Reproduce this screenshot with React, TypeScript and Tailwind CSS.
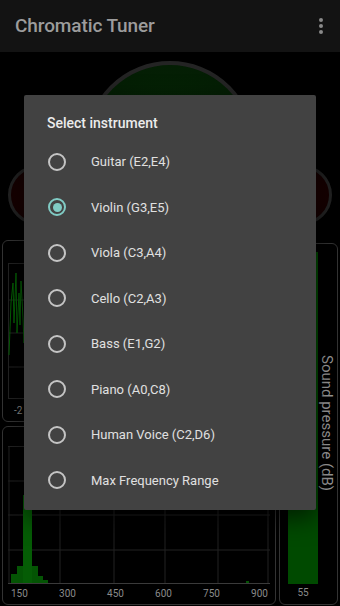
import React from "react"

const instruments = [
  "Guitar (E2,E4)",
  "Violin (G3,E5)",
  "Viola (C3,A4)",
  "Cello (C2,A3)",
  "Bass (E1,G2)",
  "Piano (A0,C8)",
  "Human Voice (C2,D6)",
  "Max Frequency Range",
]

function Radio({ checked }: { checked: boolean }) {
  return (
    <div
      className={
        checked
          ? "w-[18px] h-[18px] rounded-full border-2 border-[#80cbc4] flex items-center justify-center"
          : "w-[18px] h-[18px] rounded-full border-2 border-[#c4c4c4]"
      }
    >
      {checked && <div className="w-[9px] h-[9px] rounded-full bg-[#80cbc4]" />}
    </div>
  )
}

export default function App() {
  return (
    <div className="relative w-[340px] h-[606px] overflow-hidden bg-black font-['Roboto',sans-serif]">
      {/* App bar */}
      <div className="h-[52px] bg-[#131313] flex items-center justify-between pl-[15px] pr-[12px]">
        <span className="text-[19px] font-medium text-[#9c9c9c] tracking-[-0.1px]">Chromatic Tuner</span>
        <div className="flex flex-col gap-[2px] items-center w-[14px]">
          <div className="w-[4px] h-[4px] rounded-full bg-[#8a8a8a]" />
          <div className="w-[4px] h-[4px] rounded-full bg-[#8a8a8a]" />
          <div className="w-[4px] h-[4px] rounded-full bg-[#8a8a8a]" />
        </div>
      </div>

      {/* Gauges */}
      <div className="h-[188px] flex justify-between items-start px-[8px] pt-[9px]">
        <div className="mt-[104px] w-[60px] h-[60px] rounded-full border-[3px] border-[#222] bg-[radial-gradient(circle,#1e0000_0%,#110000_100%)]" />
        <div className="w-[170px] h-[170px] rounded-full border-[4px] border-[#242424] bg-[radial-gradient(circle,#052805_0%,#041e04_70%,#021402_100%)]" />
        <div className="mt-[104px] w-[60px] h-[60px] rounded-full border-[3px] border-[#222] bg-[radial-gradient(circle,#1e0000_0%,#110000_100%)]" />
      </div>

      {/* Charts */}
      <div className="flex h-[366px] pl-[2px] pr-[2px] pb-[1px] gap-[3px]">
        <div className="flex-1 flex flex-col gap-[4px]">
          {/* waveform */}
          <div className="h-[182px] rounded-[6px] border border-[#333] flex flex-col px-[5px] pt-[22px]">
            <svg width="262" height="136" className="block">
              <rect x="0.5" y="0.5" width="261" height="135" fill="none" stroke="#222" />
              <line x1="0" y1="37" x2="262" y2="37" stroke="#222" />
              <line x1="0" y1="70" x2="262" y2="70" stroke="#222" />
              <line x1="0" y1="104" x2="262" y2="104" stroke="#222" />
              <polyline
                fill="none"
                stroke="#056005"
                strokeWidth="1"
                points="1,92 3,40 5,20 6,60 8,10 9,70 11,30 12,62 13,18 15,55 16,80 18,40 19,25 20,60 21,100 22,50 24,70"
              />
            </svg>
            <span className="text-[10px] text-[#8a8a8a] pl-[6px] mt-[4px]">-2</span>
          </div>
          {/* spectrum */}
          <div className="flex-1 rounded-[6px] border border-[#333] flex flex-col px-[5px] pt-[19px]">
            <svg width="262" height="139" className="block">
              <line x1="1" y1="0" x2="1" y2="138" stroke="#222" />
              <line x1="52" y1="0" x2="52" y2="138" stroke="#222" />
              <line x1="106" y1="0" x2="106" y2="138" stroke="#222" />
              <line x1="157" y1="0" x2="157" y2="138" stroke="#222" />
              <line x1="210" y1="0" x2="210" y2="138" stroke="#222" />
              <line x1="260" y1="0" x2="260" y2="138" stroke="#222" />
              <line x1="0" y1="0.5" x2="262" y2="0.5" stroke="#222" />
              <line x1="0" y1="35" x2="262" y2="35" stroke="#222" />
              <line x1="0" y1="69" x2="262" y2="69" stroke="#222" />
              <line x1="0" y1="104" x2="262" y2="104" stroke="#222" />
              <rect x="3" y="128" width="6" height="9" fill="#045404" />
              <rect x="9" y="120" width="6" height="17" fill="#045404" />
              <rect x="15" y="49" width="9" height="88" fill="#055c05" />
              <rect x="24" y="120" width="6" height="17" fill="#045404" />
              <rect x="30" y="130" width="5" height="7" fill="#045404" />
              <rect x="35" y="134" width="5" height="3" fill="#045404" />
              <rect x="238" y="135" width="3" height="2" fill="#045404" />
              <line x1="0" y1="137.5" x2="262" y2="137.5" stroke="#3a3a3a" />
            </svg>
            <div className="flex justify-between text-[10px] text-[#8a8a8a] pl-[3px] pr-[2px] mt-[1px]">
              <span>150</span>
              <span>300</span>
              <span>450</span>
              <span>600</span>
              <span>750</span>
              <span>900</span>
            </div>
          </div>
        </div>

        {/* Sound pressure */}
        <div className="w-[61px] mt-[3px] rounded-[6px] border border-[#333] flex pl-[8px] pr-[1px] pt-[8px] pb-[4px]">
          <div className="flex flex-col items-center w-[30px]">
            <div className="flex-1 w-full bg-[#004a00]" />
            <span className="text-[10px] text-[#8a8a8a] mt-[2px] leading-[14px]">55</span>
          </div>
          <div className="flex-1 flex justify-center pt-[103px]">
            <span className="[writing-mode:vertical-rl] text-[15px] text-[#9a9a9a] leading-[18px] h-fit">
              Sound pressure (dB)
            </span>
          </div>
        </div>
      </div>

      {/* Dialog */}
      <div className="absolute left-[24px] top-[95px] w-[292px] h-[415px] bg-[#424242] rounded-[2px] shadow-[0_8px_24px_rgba(0,0,0,0.6)]">
        <div className="pt-[18px] pl-[23px] h-[38px] text-[14px] leading-[20px] font-medium text-[#ececec]">
          Select instrument
        </div>
        <div className="mt-[6px] flex flex-col">
          {instruments.map((name, i) => (
            <div key={name} className="h-[45.5px] flex items-center pl-[24px]">
              <Radio checked={i === 1} />
              <span className="ml-[25px] text-[13px] text-[#e0e0e0]">{name}</span>
            </div>
          ))}
        </div>
      </div>
    </div>
  )
}
